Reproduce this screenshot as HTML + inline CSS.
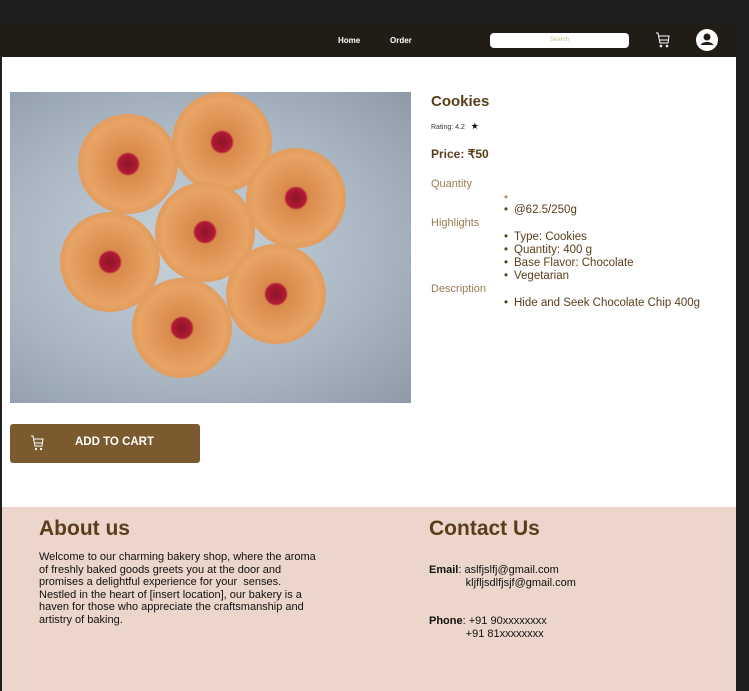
<!DOCTYPE html>
<html><head><style>
*{margin:0;padding:0;box-sizing:border-box}
body{width:749px;height:691px;background:#1f1f1f;font-family:"Liberation Sans",sans-serif;position:relative;overflow:hidden}
.hdr{position:absolute;left:0;top:24px;width:736px;height:33px;background:#221c17}
.hdr a{position:absolute;color:#fff;font-size:8px;font-weight:bold;top:12px}
.search{position:absolute;left:490px;top:9px;width:139px;height:15px;background:#fff;border-radius:4px;color:#d2b48c;font-size:6px;text-align:center;line-height:15px}
.page{position:absolute;left:2px;top:57px;width:734px;height:450px;background:#fff}
.img{position:absolute;left:10px;top:92px;width:401px;height:311px;background:radial-gradient(ellipse at 45% 50%,#c7d3dc 0,#a9b6c2 60%,#8e9aa8 100%);overflow:hidden}
.ck{position:absolute;width:100px;height:100px;border-radius:50%;background:radial-gradient(circle,#8c1328 0,#b01b34 14%,#d98a4c 17%,#e8a465 60%,#d28646 100%)}
.t{position:absolute;color:#5a3e1b}
.lbl{position:absolute;left:431px;color:#9a7a55;font-size:11px}
ul{position:absolute;left:514px;color:#5a3e1b;font-size:11.5px;list-style:none;line-height:13px}
ul li:before{content:"•";position:absolute;left:-10px}
.btn{position:absolute;left:10px;top:424px;width:190px;height:39px;background:#7a5a2e;border-radius:3px;color:#fff;font-weight:bold;font-size:11.5px}
.foot{position:absolute;left:2px;top:507px;width:734px;height:184px;background:#ecd5ca}
.foot h2{position:absolute;font-size:21px;color:#5a3e1b;font-weight:bold}
.foot p{position:absolute;font-size:11px;color:#111;line-height:12.5px}
</style></head><body>
<div class="hdr">
<a style="left:338px">Home</a><a style="left:390px">Order</a>
<div class="search">Search</div>
<svg style="position:absolute;left:655px;top:8px" width="15" height="17" viewBox="0 0 15 17" fill="none" stroke="#fff" stroke-width="1"><path d="M1 1h2l2 10h8l1-7H4"/><path d="M5 8h9"/><circle cx="6" cy="14" r=".8"/><circle cx="12" cy="14" r=".8"/></svg>
<svg style="position:absolute;left:696px;top:5px" width="22" height="22" viewBox="0 0 22 22"><circle cx="11" cy="11" r="11" fill="#fff"/><circle cx="11" cy="8" r="3.5" fill="#221c17"/><path d="M4.5 16c2-4 11-4 13 0z" fill="#221c17"/></svg>
</div>
<div class="page"></div>
<div class="img">
<div class="ck" style="left:68px;top:22px"></div>
<div class="ck" style="left:162px;top:0px"></div>
<div class="ck" style="left:236px;top:56px"></div>
<div class="ck" style="left:145px;top:90px"></div>
<div class="ck" style="left:50px;top:120px"></div>
<div class="ck" style="left:216px;top:152px"></div>
<div class="ck" style="left:122px;top:186px"></div>
</div>
<div class="t" style="left:431px;top:93px;font-size:15px;font-weight:bold">Cookies</div>
<div class="t" style="left:431px;top:121px;font-size:7px;color:#333">Rating: 4.2 &nbsp;&nbsp;<span style="font-size:9px;color:#111">★</span></div>
<div class="t" style="left:431px;top:147px;font-size:12px;font-weight:bold">Price: ₹50</div>
<div class="lbl" style="top:178px">Quantity</div>
<div class="lbl" style="top:217px">Highlights</div>
<div class="lbl" style="top:283px">Description</div>
<ul style="top:192px;color:#5a3e1b"><li style="color:#c09050;height:12px"></li><li>@62.5/250g</li></ul>
<ul style="top:231px"><li>Type: Cookies</li><li>Quantity: 400 g</li><li>Base Flavor: Chocolate</li><li>Vegetarian</li></ul>
<ul style="top:297px"><li>Hide and Seek Chocolate Chip 400g</li></ul>
<div class="btn">
<svg style="position:absolute;left:20px;top:11px" width="14" height="17" viewBox="0 0 14 17" fill="none" stroke="#fff" stroke-width="1"><path d="M1 1h2l2 10h7l1-7H4"/><path d="M5 8h8"/><circle cx="6" cy="14" r=".7"/><circle cx="11" cy="14" r=".7"/></svg>
<span style="position:absolute;left:65px;top:12px">ADD TO CART</span></div>
<div class="foot">
<h2 style="left:37px;top:10px">About us</h2>
<p style="left:37px;top:44px;width:280px">Welcome to our charming bakery shop, where the aroma of freshly baked goods greets you at the door and promises a delightful experience for your&nbsp; senses. Nestled in the heart of [insert location], our bakery is a haven for those who appreciate the craftsmanship and artistry of baking.</p>
<h2 style="left:427px;top:10px">Contact Us</h2>
<p style="left:427px;top:57px"><b>Email</b>: aslfjslfj@gmail.com<br>&nbsp;&nbsp;&nbsp;&nbsp;&nbsp;&nbsp;&nbsp;&nbsp;&nbsp;&nbsp;&nbsp;&nbsp;kljfljsdlfjsjf@gmail.com</p>
<p style="left:427px;top:108px"><b>Phone</b>: +91 90xxxxxxxx<br>&nbsp;&nbsp;&nbsp;&nbsp;&nbsp;&nbsp;&nbsp;&nbsp;&nbsp;&nbsp;&nbsp;&nbsp;+91 81xxxxxxxx</p>
</div>
</body></html>
